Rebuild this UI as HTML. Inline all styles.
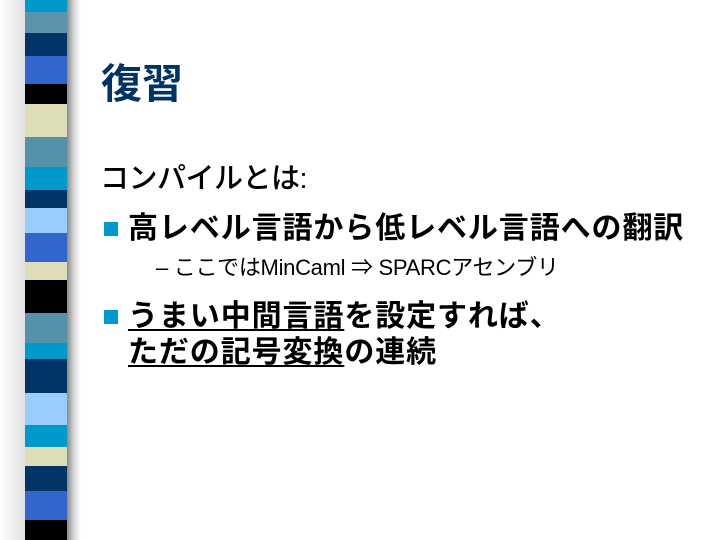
<!DOCTYPE html>
<html><head><meta charset="utf-8"><style>
html,body{margin:0;padding:0;width:720px;height:540px;overflow:hidden;background:#fff;position:relative}
.jp{font-family:"Liberation Sans","Noto Sans CJK JP",sans-serif;position:absolute;white-space:nowrap;color:#000;line-height:1}
.bar{position:absolute;left:25px;width:42px;top:0;height:540px}
.sh{position:absolute;top:0;height:540px}
.sq{position:absolute;width:14px;height:14px;background:#0099cc}
u{text-decoration:underline;text-decoration-thickness:2px;text-underline-offset:3px}
</style></head><body>
<div class="sh" style="left:0;width:25px;background:linear-gradient(to right,#fff,#e0e0e0)"></div>
<div class="sh" style="left:67px;width:14px;background:linear-gradient(to right,#8a8a8a,#d8d8d8 50%,#fff)"></div>
<div class="bar">
<div style="height:12px;background:#0099cc"></div>
<div style="height:21px;background:#5b93ad"></div>
<div style="height:23px;background:#003366"></div>
<div style="height:28px;background:#3366cc"></div>
<div style="height:20px;background:#000"></div>
<div style="height:33px;background:#ddddb8"></div>
<div style="height:30px;background:#5591aa"></div>
<div style="height:23px;background:#0099cc"></div>
<div style="height:18px;background:#003366"></div>
<div style="height:25px;background:#99ccff"></div>
<div style="height:29px;background:#3366cc"></div>
<div style="height:18px;background:#ddddb8"></div>
<div style="height:33px;background:#000"></div>
<div style="height:30px;background:#5591aa"></div>
<div style="height:16px;background:#0099cc"></div>
<div style="height:34px;background:#003366"></div>
<div style="height:32px;background:#99ccff"></div>
<div style="height:22px;background:#0099cc"></div>
<div style="height:19px;background:#ddddb8"></div>
<div style="height:25px;background:#003366"></div>
<div style="height:29px;background:#3366cc"></div>
<div style="height:20px;background:#000"></div>
</div>
<div class="jp" style="left:101px;top:64px;font-size:41px;font-weight:bold;color:#003366">復習</div>
<div class="jp" style="left:100px;top:165px;font-size:29px;letter-spacing:-0.5px;font-weight:500">コンパイルとは:</div>
<div class="sq" style="left:104px;top:222px"></div>
<div class="jp" style="left:128px;top:214px;font-size:30px;letter-spacing:0.9px;font-weight:bold">高レベル言語から低レベル言語への翻訳</div>
<div class="jp" style="left:156px;top:257px;font-size:22px;letter-spacing:-0.3px">– ここではMinCaml ⇒ SPARCアセンブリ</div>
<div class="sq" style="left:104px;top:310px"></div>
<div class="jp" style="left:128px;top:302px;font-size:30px;letter-spacing:0.9px;font-weight:bold"><u>うまい中間言語</u>を設定すれば、</div>
<div class="jp" style="left:128px;top:338px;font-size:30px;letter-spacing:0.9px;font-weight:bold"><u>ただの記号変換</u>の連続</div>
</body></html>
